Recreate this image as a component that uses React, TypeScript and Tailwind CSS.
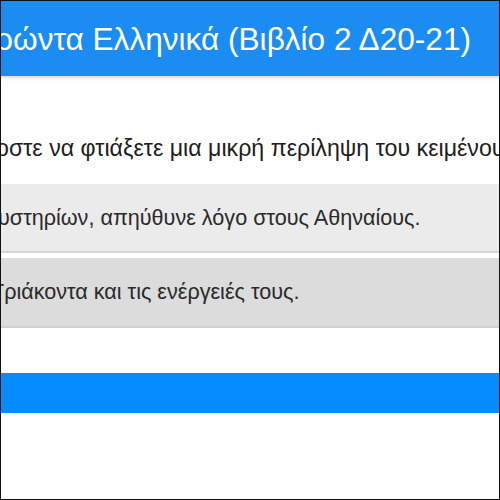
import React from 'react';

export default function App() {
  return (
    <div className="w-[500px] h-[500px] overflow-hidden border border-[#111] bg-white font-['Liberation_Sans',Arial,sans-serif]">
      {/* Header */}
      <div className="h-[75px] bg-[#1a8cf2] shadow-[0_2px_3px_rgba(0,0,0,0.15)] flex items-center whitespace-nowrap">
        <h1 className="-ml-[6px] text-[31.6px] text-white leading-none pt-[2px]">
          ρώντα Ελληνικά (Βιβλίο 2 Δ20-21)
        </h1>
      </div>

      {/* Instruction line */}
      <p className="mt-[61px] -ml-[5px] whitespace-nowrap text-[23.2px] text-[#1d1d1d] leading-none">
        οστε να φτιάξετε μια μικρή περίληψη του κειμένου
      </p>

      {/* Answer options */}
      <div className="mt-[24px] flex flex-col gap-[5px]">
        <div className="h-[69px] bg-[#ebebeb] border-b-2 border-[#d6d6d6] flex items-center whitespace-nowrap">
          <span className="-ml-[3px] text-[21.6px] text-[#2a2a2a]">
            υστηρίων, απηύθυνε λόγο στους Αθηναίους.
          </span>
        </div>
        <div className="h-[70px] bg-[#dcdcdc] border-b-2 border-[#cfcfcf] flex items-center whitespace-nowrap">
          <span className="-ml-[10px] text-[21.6px] text-[#2a2a2a]">
            Τριάκοντα και τις ενέργειές τους.
          </span>
        </div>
      </div>

      {/* Bottom bar */}
      <div className="mt-[45px] h-[40px] bg-[#058cff]" />
    </div>
  );
}
